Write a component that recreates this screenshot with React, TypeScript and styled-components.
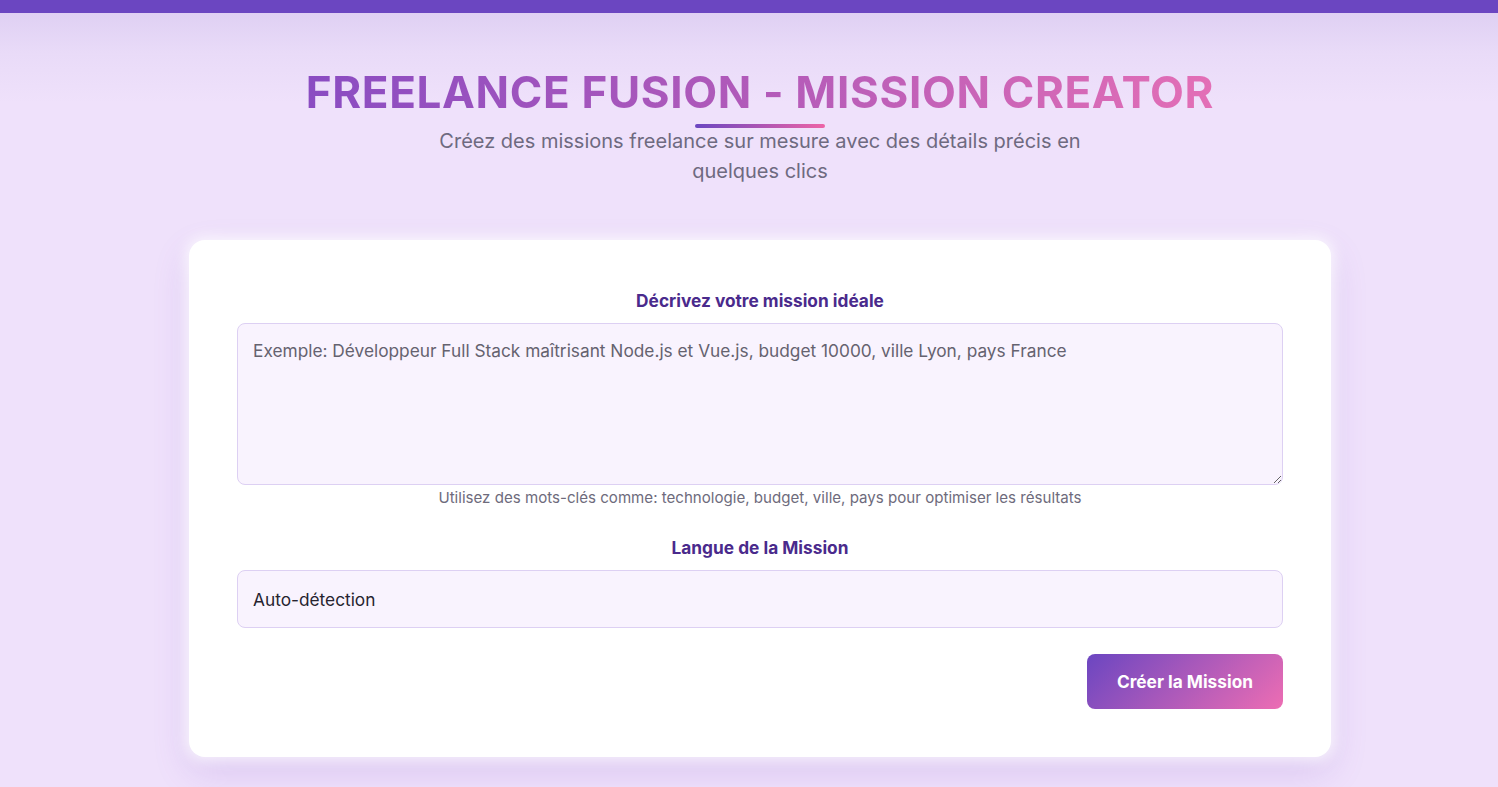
import React from "react";
import styled, { createGlobalStyle } from "styled-components";

const GlobalStyle = createGlobalStyle`
  html, body { margin: 0; padding: 0; }
  body {
    font-family: Inter, "Noto Sans", sans-serif;
    background: #efe1fb;
    min-height: 787px;
  }
  * { box-sizing: border-box; }
`;

const TopBar = styled.div`
  height: 13px;
  background: #6b46c1;
`;

const Page = styled.div`
  background: linear-gradient(180deg, #dfd0f3 0px, #e9dbf8 40px, #efe1fb 90px, #efe1fb 100%);
  min-height: 774px;
  padding: 53px 0 0 22px;
  display: flex;
  flex-direction: column;
  align-items: center;
  overflow: hidden;
`;

const Header = styled.header`
  display: flex;
  flex-direction: column;
  align-items: center;
  text-align: center;
`;

const Title = styled.h1`
  margin: 0;
  font-size: 44px;
  font-weight: 700;
  letter-spacing: 0.65px;
  line-height: 53px;
  background: linear-gradient(90deg, #8a4cc2 0%, #b25ab9 50%, #e36fb6 100%);
  -webkit-background-clip: text;
  background-clip: text;
  color: transparent;
`;

const Underline = styled.div`
  width: 130px;
  height: 4px;
  border-radius: 2px;
  margin-top: 5px;
  background: linear-gradient(90deg, #6b46c1, #ed64a6);
`;

const Subtitle = styled.p`
  margin: -2px 0 0;
  max-width: 680px;
  font-size: 20px;
  line-height: 30px;
  color: #6e6a80;
`;

const Card = styled.div`
  margin-top: 54px;
  width: 1142px;
  background: #ffffff;
  border-radius: 16px;
  padding: 51px 48px 48px;
  box-shadow: 0 0 14px 4px rgba(255, 255, 255, 0.75), 0 14px 36px rgba(130, 80, 200, 0.2);
  display: flex;
  flex-direction: column;
`;

const Field = styled.div<{ $gap?: number }>`
  display: flex;
  flex-direction: column;
  margin-top: ${(p) => p.$gap ?? 0}px;
`;

const Label = styled.label`
  text-align: center;
  font-size: 17.3px;
  font-weight: 700;
  line-height: 20px;
  color: #4a2a8c;
  margin-bottom: 12px;
`;

const TextArea = styled.textarea`
  width: 100%;
  height: 162px;
  padding: 15px;
  border: 1px solid #ddd0f3;
  border-radius: 8px;
  background: #f9f3fe;
  font-family: Inter, "Noto Sans", sans-serif;
  font-size: 17.3px;
  line-height: 24px;
  color: #2d2b3a;
  resize: vertical;
  outline: none;
  &::placeholder { color: #65626f; }
`;

const Hint = styled.div`
  text-align: center;
  font-size: 15.1px;
  line-height: 20px;
  color: #6e6b7c;
  margin-top: 3px;
`;

const Select = styled.select`
  width: 100%;
  height: 58px;
  padding: 0 15px;
  border: 1px solid #ddd0f3;
  border-radius: 8px;
  background: #f9f3fe;
  font-family: Inter, "Noto Sans", sans-serif;
  font-size: 17.3px;
  color: #26232f;
  appearance: none;
  -webkit-appearance: none;
  outline: none;
`;

const Actions = styled.div`
  display: flex;
  justify-content: flex-end;
  margin-top: 26px;
`;

const Button = styled.button`
  border: none;
  border-radius: 8px;
  padding: 16px 30px;
  font-family: Inter, "Noto Sans", sans-serif;
  font-size: 17.3px;
  font-weight: 700;
  line-height: 23px;
  color: #ffffff;
  background: linear-gradient(135deg, #6b46c1 0%, #ed6db3 100%);
  cursor: pointer;
`;

export default function App() {
  return (
    <>
      <GlobalStyle />
      <TopBar />
      <Page>
        <Header>
          <Title>FREELANCE FUSION - MISSION CREATOR</Title>
          <Underline />
          <Subtitle>
            Créez des missions freelance sur mesure avec des détails précis en quelques clics
          </Subtitle>
        </Header>
        <Card>
          <Field>
            <Label htmlFor="mission">Décrivez votre mission idéale</Label>
            <TextArea
              id="mission"
              placeholder="Exemple: Développeur Full Stack maîtrisant Node.js et Vue.js, budget 10000, ville Lyon, pays France"
            />
            <Hint>Utilisez des mots-clés comme: technologie, budget, ville, pays pour optimiser les résultats</Hint>
          </Field>
          <Field $gap={30}>
            <Label htmlFor="lang">Langue de la Mission</Label>
            <Select id="lang" defaultValue="auto">
              <option value="auto">Auto-détection</option>
              <option value="fr">Français</option>
              <option value="en">English</option>
            </Select>
          </Field>
          <Actions>
            <Button type="button">Créer la Mission</Button>
          </Actions>
        </Card>
      </Page>
    </>
  );
}
